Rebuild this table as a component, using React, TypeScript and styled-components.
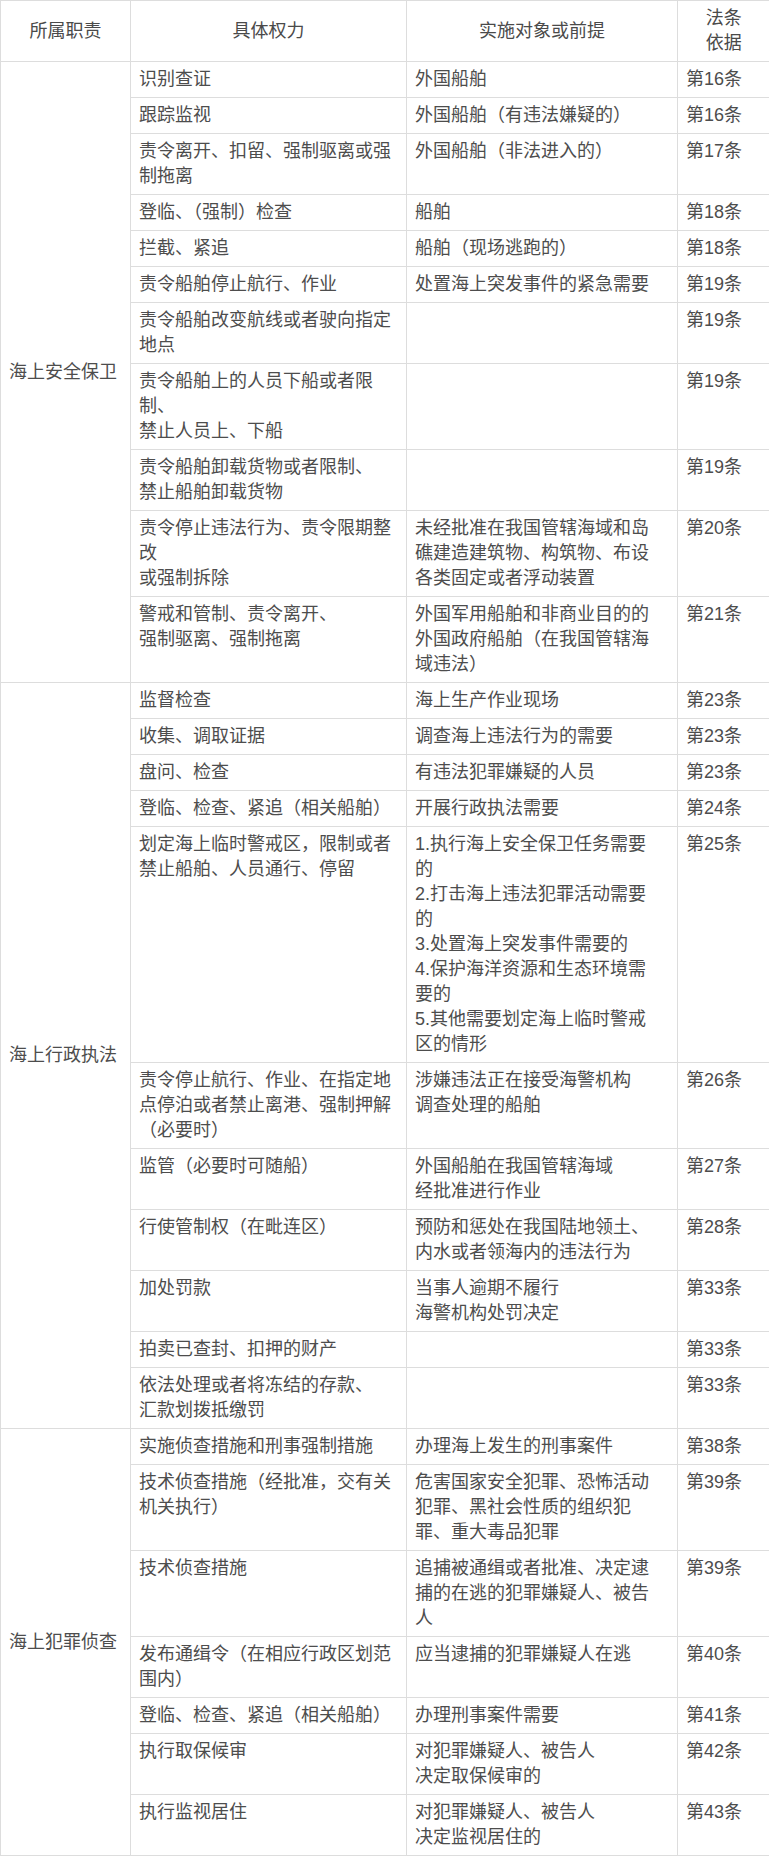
import React from 'react';
import styled, { createGlobalStyle } from 'styled-components';

type Row = { power: string[]; target: string[]; law: string };
type Section = { duty: string; rows: Row[] };

const sections: Section[] = [
  {
    duty: '海上安全保卫',
    rows: [
      { power: ['识别查证'], target: ['外国船舶'], law: '第16条' },
      { power: ['跟踪监视'], target: ['外国船舶（有违法嫌疑的）'], law: '第16条' },
      { power: ['责令离开、扣留、强制驱离或强制拖离'], target: ['外国船舶（非法进入的）'], law: '第17条' },
      { power: ['登临、（强制）检查'], target: ['船舶'], law: '第18条' },
      { power: ['拦截、紧追'], target: ['船舶（现场逃跑的）'], law: '第18条' },
      { power: ['责令船舶停止航行、作业'], target: ['处置海上突发事件的紧急需要'], law: '第19条' },
      { power: ['责令船舶改变航线或者驶向指定地点'], target: [], law: '第19条' },
      { power: ['责令船舶上的人员下船或者限制、', '禁止人员上、下船'], target: [], law: '第19条' },
      { power: ['责令船舶卸载货物或者限制、', '禁止船舶卸载货物'], target: [], law: '第19条' },
      {
        power: ['责令停止违法行为、责令限期整改', '或强制拆除'],
        target: ['未经批准在我国管辖海域和岛礁建造建筑物、构筑物、布设各类固定或者浮动装置'],
        law: '第20条',
      },
      {
        power: ['警戒和管制、责令离开、', '强制驱离、强制拖离'],
        target: ['外国军用船舶和非商业目的的外国政府船舶（在我国管辖海域违法）'],
        law: '第21条',
      },
    ],
  },
  {
    duty: '海上行政执法',
    rows: [
      { power: ['监督检查'], target: ['海上生产作业现场'], law: '第23条' },
      { power: ['收集、调取证据'], target: ['调查海上违法行为的需要'], law: '第23条' },
      { power: ['盘问、检查'], target: ['有违法犯罪嫌疑的人员'], law: '第23条' },
      { power: ['登临、检查、紧追（相关船舶）'], target: ['开展行政执法需要'], law: '第24条' },
      {
        power: ['划定海上临时警戒区，限制或者禁止船舶、人员通行、停留'],
        target: [
          '1.执行海上安全保卫任务需要的',
          '2.打击海上违法犯罪活动需要的',
          '3.处置海上突发事件需要的',
          '4.保护海洋资源和生态环境需要的',
          '5.其他需要划定海上临时警戒区的情形',
        ],
        law: '第25条',
      },
      {
        power: ['责令停止航行、作业、在指定地点停泊或者禁止离港、强制押解（必要时）'],
        target: ['涉嫌违法正在接受海警机构', '调查处理的船舶'],
        law: '第26条',
      },
      { power: ['监管（必要时可随船）'], target: ['外国船舶在我国管辖海域', '经批准进行作业'], law: '第27条' },
      { power: ['行使管制权（在毗连区）'], target: ['预防和惩处在我国陆地领土、内水或者领海内的违法行为'], law: '第28条' },
      { power: ['加处罚款'], target: ['当事人逾期不履行', '海警机构处罚决定'], law: '第33条' },
      { power: ['拍卖已查封、扣押的财产'], target: [], law: '第33条' },
      { power: ['依法处理或者将冻结的存款、', '汇款划拨抵缴罚'], target: [], law: '第33条' },
    ],
  },
  {
    duty: '海上犯罪侦查',
    rows: [
      { power: ['实施侦查措施和刑事强制措施'], target: ['办理海上发生的刑事案件'], law: '第38条' },
      {
        power: ['技术侦查措施（经批准，交有关机关执行）'],
        target: ['危害国家安全犯罪、恐怖活动犯罪、黑社会性质的组织犯罪、重大毒品犯罪'],
        law: '第39条',
      },
      {
        power: ['技术侦查措施'],
        target: ['追捕被通缉或者批准、决定逮捕的在逃的犯罪嫌疑人、被告人'],
        law: '第39条',
      },
      { power: ['发布通缉令（在相应行政区划范围内）'], target: ['应当逮捕的犯罪嫌疑人在逃'], law: '第40条' },
      { power: ['登临、检查、紧追（相关船舶）'], target: ['办理刑事案件需要'], law: '第41条' },
      { power: ['执行取保候审'], target: ['对犯罪嫌疑人、被告人', '决定取保候审的'], law: '第42条' },
      { power: ['执行监视居住'], target: ['对犯罪嫌疑人、被告人', '决定监视居住的'], law: '第43条' },
    ],
  },
];

const Lines = ({ lines }: { lines: string[] }) => (
  <>
    {lines.map((l, i) => (
      <React.Fragment key={i}>
        {i > 0 && <br />}
        {l}
      </React.Fragment>
    ))}
  </>
);

const App = () => {
  return (
    <>
      <GlobalStyle />
      <Table>
        <colgroup>
          <Col $w={130} />
          <Col $w={276} />
          <Col $w={271} />
          <Col $w={92} />
        </colgroup>
        <thead>
          <tr>
            <Head>所属职责</Head>
            <Head>具体权力</Head>
            <Head>实施对象或前提</Head>
            <Head $last>
              法条
              <br />
              依据
            </Head>
          </tr>
        </thead>
        <tbody>
          {sections.map((section) =>
            section.rows.map((row, i) => (
              <tr key={section.duty + i}>
                {i === 0 && <DutyCell rowSpan={section.rows.length}>{section.duty}</DutyCell>}
                <Cell>
                  <Lines lines={row.power} />
                </Cell>
                <Cell $padRight={20}>
                  <Lines lines={row.target} />
                </Cell>
                <Cell $last>{row.law}</Cell>
              </tr>
            ))
          )}
        </tbody>
      </Table>
    </>
  );
};

export default App;

const GlobalStyle = createGlobalStyle`
  html, body {
    margin: 0;
    padding: 0;
    background: #ffffff;
    overflow-x: hidden;
  }
  body {
    font-family: "Liberation Sans", "Noto Sans CJK SC", sans-serif;
    color: #4d4d4d;
  }
`;

const Table = styled.table`
  width: 769px;
  table-layout: fixed;
  border-collapse: collapse;
  font-size: 18px;
  line-height: 25px;
`;

const Col = styled.col<{ $w: number }>`
  width: ${(p) => p.$w}px;
`;

const Head = styled.th<{ $last?: boolean }>`
  font-weight: 400;
  text-align: center;
  vertical-align: middle;
  padding: 5px 8px;
  border: 1px solid #dddddd;
  border-right: ${(p) => (p.$last ? 'none' : '1px solid #dddddd')};
  color: #4a4a4a;
`;

const Cell = styled.td<{ $padRight?: number; $last?: boolean }>`
  vertical-align: top;
  text-align: left;
  padding: 5px ${(p) => p.$padRight ?? 8}px 5px 8px;
  border: 1px solid #dddddd;
  border-right: ${(p) => (p.$last ? 'none' : '1px solid #dddddd')};
`;

const DutyCell = styled.td`
  vertical-align: middle;
  text-align: left;
  padding: 5px 8px;
  border: 1px solid #dddddd;
  white-space: nowrap;
`;
